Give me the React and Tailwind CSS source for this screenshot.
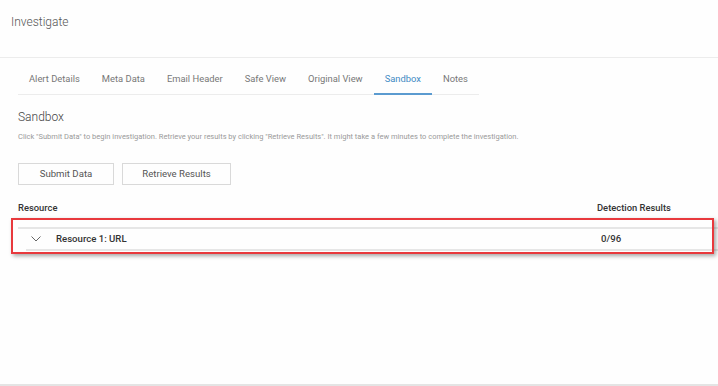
export default function App() {
  const tabs = ["Alert Details", "Meta Data", "Email Header", "Safe View", "Original View", "Sandbox", "Notes"];
  return (
    <div className="relative w-[718px] h-[386px] bg-[#fefefe] border-b-2 border-[#e4e4e4] overflow-hidden" style={{ fontFamily: "Roboto, 'Liberation Sans', sans-serif" }}>
      <div className="h-[58px] border-b border-[#ececec] px-[11px] pt-[14px]">
        <div className="text-[12px] leading-[16px] font-light text-[#555]">Investigate</div>
      </div>
      <div className="ml-[18px] w-fit flex border-b border-[#ececec]">
        {tabs.map((t) => (
          <div
            key={t}
            className={
              t === "Sandbox"
                ? "shrink-0 whitespace-nowrap px-[11px] pt-[15px] pb-[8px] text-[9.4px] leading-[12px] text-[#3f8ac4] border-b-2 border-[#5b9bd0] -mb-px"
                : "shrink-0 whitespace-nowrap px-[11px] pt-[15px] pb-[8px] text-[9.4px] leading-[12px] text-[#777] border-b-2 border-transparent -mb-px"
            }
          >
            {t}
          </div>
        ))}
      </div>
      <div className="px-[18px]">
        <div className="mt-[14px] text-[12px] leading-[16px] font-light text-[#444]">Sandbox</div>
        <div className="mt-[7px] text-[7.5px] leading-[10px] text-[#9a9a9a] whitespace-nowrap">
          Click "Submit Data" to begin investigation. Retrieve your results by clicking "Retrieve Results". It might take a few minutes to complete the investigation.
        </div>
        <div className="mt-[21px] flex gap-[8px]">
          <div className="w-[96px] h-[22px] border border-[#d9d9d9] flex items-center justify-center text-[9.6px] text-[#555]">Submit Data</div>
          <div className="w-[109px] h-[22px] border border-[#d9d9d9] flex items-center justify-center text-[9.6px] text-[#555]">Retrieve Results</div>
        </div>
        <div className="mt-[17px] flex text-[9.4px] leading-[12px] font-medium text-[#333]">
          <div className="w-[579px]">Resource</div>
          <div>Detection Results</div>
        </div>
      </div>
      <div className="ml-[18px] mt-[13px] border-t-2 border-[#e6e6e6]">
        <div className="ml-[8px] h-[22px] border-b-2 border-[#e6e6e6] flex items-center text-[9.6px] font-medium text-[#333]">
          <svg width="10" height="6" viewBox="0 0 10 6" className="ml-[5px]" fill="none" stroke="#666" strokeWidth="1">
            <path d="M0.5 0.5 L5 5 L9.5 0.5" />
          </svg>
          <div className="ml-[15px] w-[545px]">Resource 1: URL</div>
          <div>0/96</div>
        </div>
      </div>
      <div className="absolute left-[11px] top-[218px] w-[703px] h-[36px] border-2 border-[#e8393d] shadow-[2px_2px_4px_rgba(0,0,0,0.35)]" />
    </div>
  );
}
